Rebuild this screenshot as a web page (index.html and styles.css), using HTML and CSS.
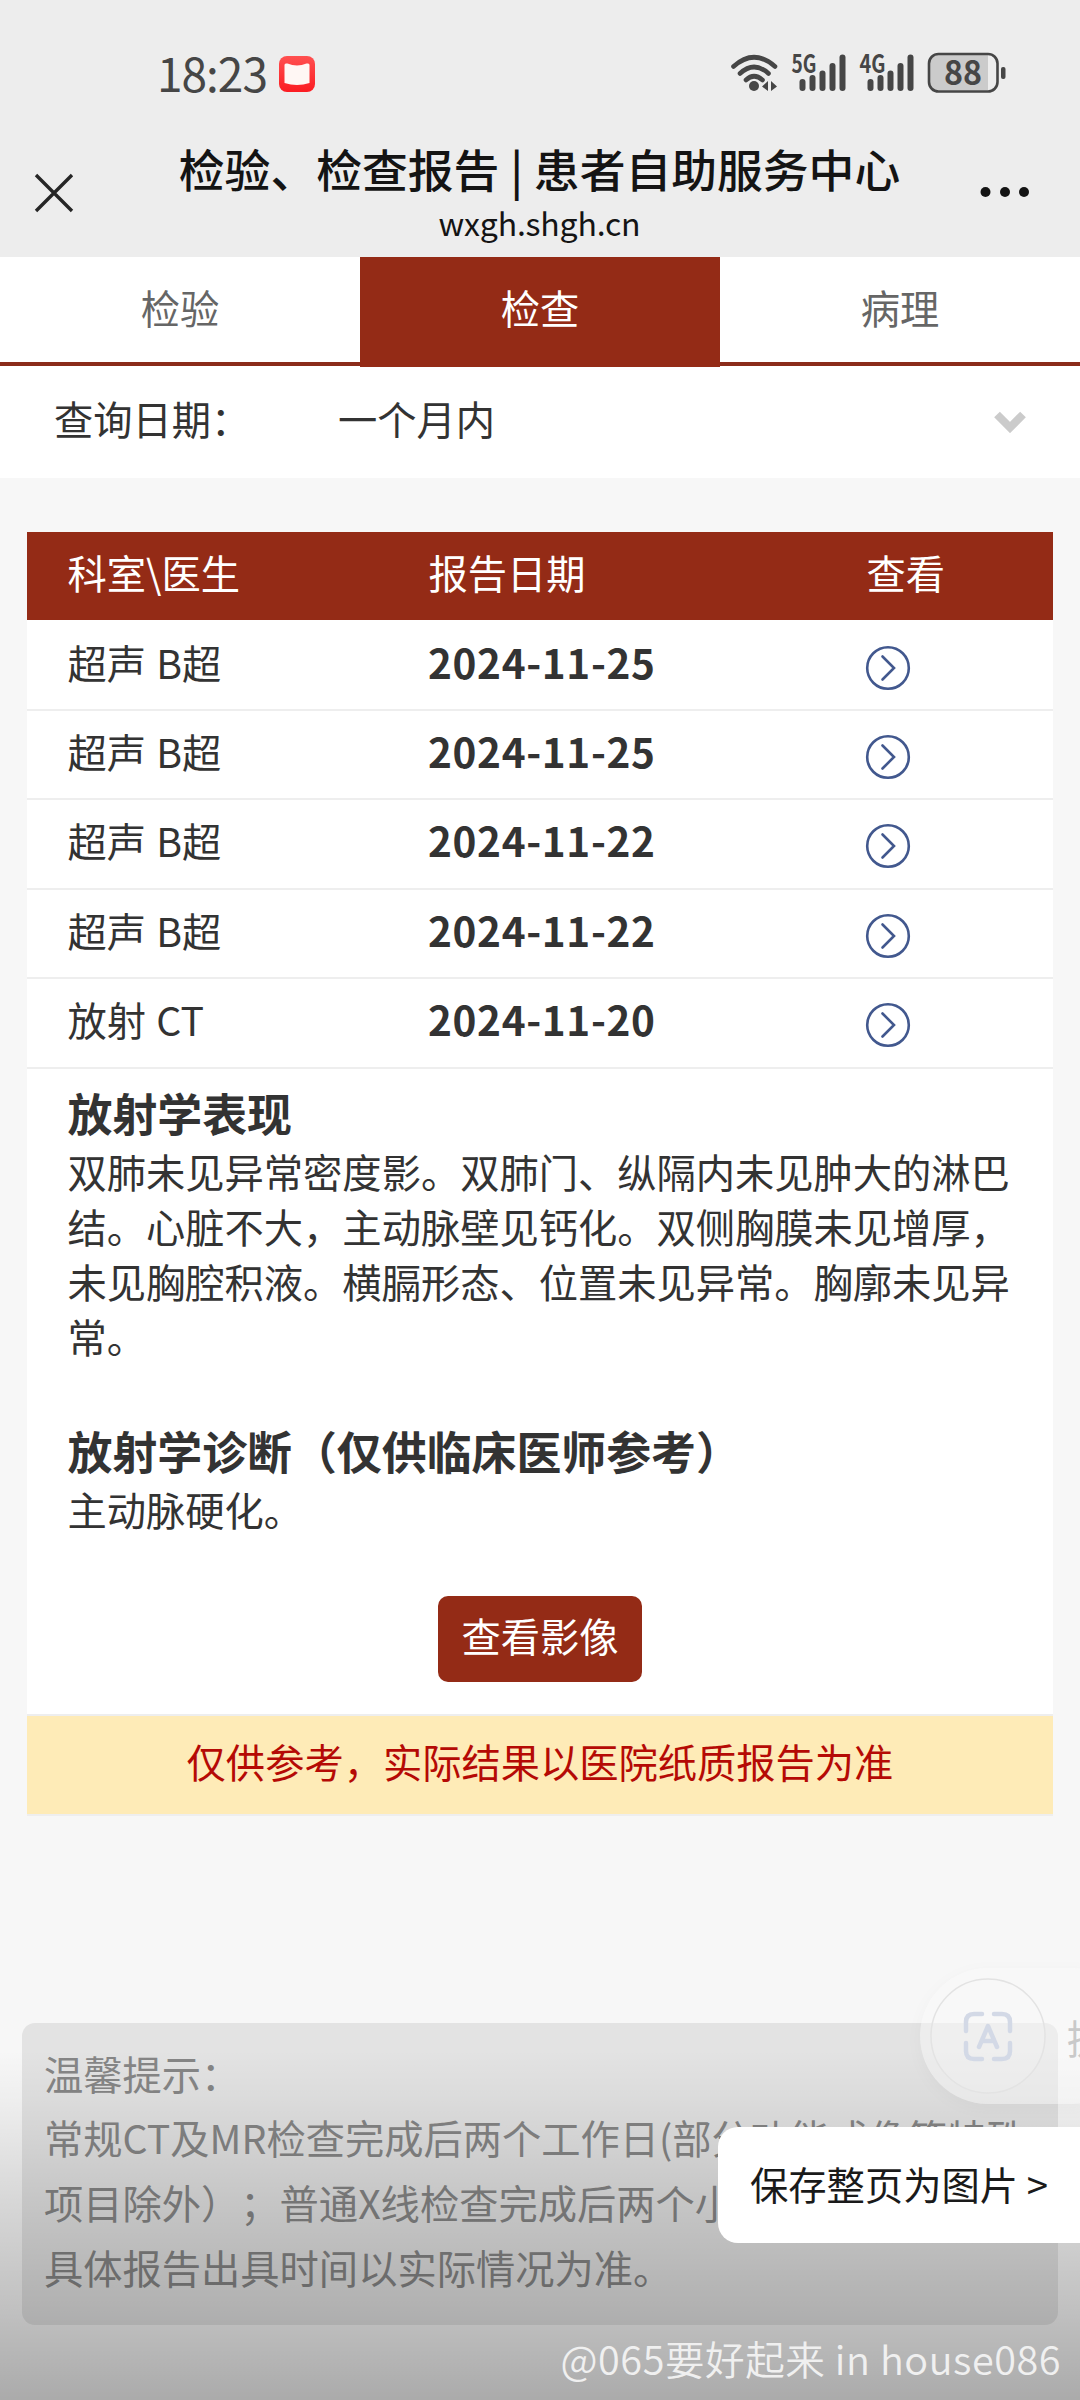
FILE: index.html
```html
<!DOCTYPE html>
<html lang="zh-CN">
<head>
<meta charset="utf-8">
<title>检验、检查报告 | 患者自助服务中心</title>
<link rel="stylesheet" href="styles.css">
</head>
<body>
<div class="screen">
  <header class="top">
    <div class="status">
      <span class="clock">18:23</span>
      <svg class="app-icon" viewBox="0 0 36 36"><defs><linearGradient id="red" x1="0" y1="0" x2="0" y2="1"><stop offset="0" stop-color="#ff5050"/><stop offset="1" stop-color="#fb1c22"/></linearGradient></defs><rect width="36" height="36" rx="8" fill="url(#red)"/><path d="M5.500 9Q5.500 7.500 7 7.500H8.500Q18 11.500 27.500 7.500H29Q30.500 7.500 30.500 9V27Q18 31 5.500 27Z" fill="#fff7f4"/></svg>
      <svg class="status-icons" viewBox="0 0 276 40">
        <g fill="none" stroke="#464646" stroke-width="4.600" stroke-linecap="round">
          <path d="M3.500 13.500Q24 -5 45 13.500"/><path d="M10 20.500Q24 7.500 38.500 20.500"/><path d="M16 27Q24 19.500 32.500 27"/>
        </g>
        <g fill="#464646">
          <circle cx="24" cy="33" r="5"/><path d="M32 33.500L38 28V38ZM47 33.500L41 28V38Z"/>
          <rect x="69.500" y="26" width="6" height="12" rx="3"/><rect x="79.500" y="22" width="6" height="16" rx="3"/><rect x="89.500" y="17.500" width="6" height="20.500" rx="3"/><rect x="99.500" y="10" width="6" height="28" rx="3"/><rect x="109.500" y="1.500" width="6" height="36.500" rx="3"/>
          <rect x="137.500" y="26" width="6" height="12" rx="3"/><rect x="147.500" y="22" width="6" height="16" rx="3"/><rect x="157.500" y="17.500" width="6" height="20.500" rx="3"/><rect x="167.500" y="10" width="6" height="28" rx="3"/><rect x="177.500" y="1.500" width="6" height="36.500" rx="3"/>
          <rect x="271" y="14" width="4.500" height="12" rx="2"/>
        </g>
        <path d="M208 1.500H258V37.500H208Q199.500 37.500 199.500 29V10Q199.500 1.500 208 1.500Z" fill="#cbcbcb"/>
        <rect x="199" y="1" width="68.500" height="37.500" rx="9.500" fill="none" stroke="#464646" stroke-width="2.600"/>
        <g class="icon-text"><text x="61.500" y="20" font-size="25" textLength="25" lengthAdjust="spacingAndGlyphs">5G</text><text x="129.500" y="20" font-size="25" textLength="26" lengthAdjust="spacingAndGlyphs">4G</text><text x="214" y="31.500" font-size="34" textLength="38" lengthAdjust="spacingAndGlyphs">88</text></g>
      </svg>
    </div>
    <div class="nav">
      <svg class="close" viewBox="0 0 40 40"><path d="M2 2L38 38M38 2L2 38" stroke="#262626" stroke-width="3.400"/></svg>
      <div class="nav-title"><h1>检验、检查报告 | 患者自助服务中心</h1><p>wxgh.shgh.cn</p></div>
      <svg class="more" viewBox="0 0 50 12"><g fill="#141414"><circle cx="5.500" cy="6" r="5"/><circle cx="25" cy="6" r="5"/><circle cx="44" cy="6" r="5"/></g></svg>
    </div>
  </header>

  <nav class="tabs"><span class="tab">检验</span><span class="tab active">检查</span><span class="tab">病理</span></nav>

  <div class="query">
    <span class="query-label">查询日期：</span><span class="query-value">一个月内</span>
    <svg class="chevron" viewBox="0 0 32 22"><path d="M3 3.500L16 16.500L29 3.500" fill="none" stroke="#cbcbcb" stroke-width="8"/></svg>
  </div>

  <main class="report">
    <div class="row head"><span>科室\医生</span><span>报告日期</span><span>查看</span></div>
    <div class="row"><span>超声 B超</span><b>2024-11-25</b><svg class="go" viewBox="0 0 46 46"><circle cx="23" cy="23" r="20.800"/><path d="M17.500 11.500L29 23L17.500 34.500"/></svg></div>
    <div class="row"><span>超声 B超</span><b>2024-11-25</b><svg class="go" viewBox="0 0 46 46"><circle cx="23" cy="23" r="20.800"/><path d="M17.500 11.500L29 23L17.500 34.500"/></svg></div>
    <div class="row"><span>超声 B超</span><b>2024-11-22</b><svg class="go" viewBox="0 0 46 46"><circle cx="23" cy="23" r="20.800"/><path d="M17.500 11.500L29 23L17.500 34.500"/></svg></div>
    <div class="row"><span>超声 B超</span><b>2024-11-22</b><svg class="go" viewBox="0 0 46 46"><circle cx="23" cy="23" r="20.800"/><path d="M17.500 11.500L29 23L17.500 34.500"/></svg></div>
    <div class="row"><span>放射 CT</span><b>2024-11-20</b><svg class="go" viewBox="0 0 46 46"><circle cx="23" cy="23" r="20.800"/><path d="M17.500 11.500L29 23L17.500 34.500"/></svg></div>
    <section class="detail">
      <h2>放射学表现</h2>
      <p>双肺未见异常密度影。双肺门、纵隔内未见肿大的淋巴<br>结。心脏不大，主动脉壁见钙化。双侧胸膜未见增厚，<br>未见胸腔积液。横膈形态、位置未见异常。胸廓未见异<br>常。</p>
      <h2 class="diagnosis">放射学诊断（仅供临床医师参考）</h2>
      <p>主动脉硬化。</p>
      <button class="view">查看影像</button>
    </section>
    <div class="notice">仅供参考，实际结果以医院纸质报告为准</div>
  </main>

  <aside class="tips">温馨提示：<br>常规CT及MR检查完成后两个工作日(部分功能成像等特殊<br>项目除外）；普通X线检查完成后两个小<br>具体报告出具时间以实际情况为准。</aside>

  <div class="shade"></div>
  <div class="scan">
    <svg class="scan-icon" viewBox="0 0 116 116"><circle cx="58" cy="58" r="57"/><g><path d="M36 53V44Q36 36 44 36H52M64 36H72Q80 36 80 44V53M80 65V73Q80 81 72 81H64M52 81H44Q36 81 36 73V65"/><path d="M49 69L58 48L67 69M53 63H63"/></g></svg>
    <span>提</span>
  </div>
  <div class="save">保存整页为图片 &gt;</div>
  <div class="watermark">@065要好起来 in house086</div>
</div>
</body>
</html>
```

FILE: styles.css
```css
* { box-sizing: border-box; margin: 0; padding: 0; }
body { font-family: "Noto Sans CJK SC", "Noto Sans", sans-serif; font-size: 39.27px; color: #333; background: #f7f7f7; text-spacing-trim: space-all; }
.screen { position: relative; width: 1080px; height: 2400px; overflow: hidden; display: flex; flex-direction: column; background: #f7f7f7; }
svg { display: block; flex: none; }

.top { height: 257px; flex: none; background: #ededed; }
.status { height: 132px; padding: 52px 74px 0 157px; display: flex; align-items: flex-start; }
.clock { width: 122px; font-size: 46px; line-height: 40px; letter-spacing: -1px; color: #464646; }
.app-icon { width: 36px; height: 36px; margin-top: 4px; }
.status-icons { width: 276px; height: 40px; margin: 1px 0 0 auto; overflow: visible; }
.icon-text { fill: #464646; font-weight: 700; }
.nav { height: 125px; padding: 0 50px 0 34px; display: flex; align-items: flex-start; justify-content: space-between; }
.close { width: 40px; height: 40px; margin-top: 41px; }
.more { width: 50px; height: 12px; margin-top: 54px; }
.nav-title { width: 760px; text-align: center; color: #141414; white-space: nowrap; padding-left: 25px; }
.nav-title h1 { font-size: 45.8px; font-weight: 500; line-height: 60px; padding-top: 6px; word-spacing: 0.5px; }
.nav-title p { font-size: 32px; line-height: 40px; padding-top: 4px; letter-spacing: -0.2px; }

.tabs { height: 110px; flex: none; display: flex; align-items: flex-start; background: linear-gradient(#fff 105px, #8b2c1a 105px, #8b2c1a 109px, #fff 109px); }
.tab { flex: 1; height: 110px; line-height: 100px; text-align: center; color: #666; }
.tab.active { background: #942b16; color: #fff; }

.query { height: 111px; flex: none; padding: 0 54px; background: #fff; display: flex; align-items: flex-start; line-height: 102px; }
.query-label { width: 284px; }
.query-value { flex: 1; }
.chevron { width: 32px; height: 22px; margin-top: 44px; }

.report { width: 1026px; margin: 54px 27px 0; flex: none; background: #fff; }
.row { height: 89.4px; padding-left: 40.5px; display: grid; grid-template-columns: 360.5px 436px 1fr; line-height: 79px; border-bottom: 2px solid #eee; }
.row.head { height: 88px; background: #942b16; color: #fff; line-height: 79px; border: 0; grid-template-columns: 361px 438px 1fr; }
.row.head + .row { height: 91px; padding-top: 1.600px; }
.row b { font-weight: 700; color: #333; font-size: 40.5px; letter-spacing: 0.65px; }
.row span { word-spacing: 1.5px; }
.go { width: 46px; height: 46px; margin: 23px 0 0 1px; fill: none; stroke: #42588e; stroke-width: 2.600; stroke-linecap: round; }
.detail { padding: 16px 40.5px 0; height: 645px; line-height: 55px; }
.detail p { white-space: nowrap; }
.detail h2 { font-size: 44.9px; line-height: 56px; height: 58px; }
.detail .diagnosis { margin-top: 60px; }
.view { display: block; width: 204px; height: 86px; margin: 60px auto 0; border: 0; border-radius: 10px; background: #942b16; color: #fff; font: inherit; line-height: 78px; padding-bottom: 8px; }
.notice { height: 102px; background: #feebb7; color: #b50a05; text-align: center; line-height: 89px; border: solid #eee; border-width: 2px 0; }

.tips { margin: 207px 22px 0; height: 302px; flex: none; padding: 18px 0 0 22px; border-radius: 13px; background: #e3e3e3; color: #868686; line-height: 64.8px; white-space: nowrap; }

/* bottom fade over the page */
.shade { position: absolute; left: 0; right: 0; bottom: 0; height: 350px; background: linear-gradient(rgba(0,0,0,0), rgba(0,0,0,.035) 14%, rgba(0,0,0,.13) 43%, rgba(0,0,0,.225) 75%, rgba(0,0,0,.31)); }
.scan { position: absolute; left: 920px; top: 1968px; width: 220px; height: 136px; border-radius: 68px; background: rgba(250,250,250,.42); box-shadow: 0 4px 18px rgba(0,0,0,.03); display: flex; align-items: center; gap: 21px; padding-left: 10px; color: #c9c9c9; }
.scan-icon { width: 116px; height: 116px; }
.scan-icon circle { fill: rgba(255,255,255,.12); stroke: #e3e3e3; stroke-width: 1.500; }
.scan-icon g { fill: none; stroke: #d3d9e6; stroke-width: 4.500; stroke-linecap: round; stroke-linejoin: round; }
.save { position: absolute; left: 718px; top: 2127px; width: 362px; height: 116px; border-radius: 20px 0 0 20px; background: #fff; color: #1a1a1a; font-size: 38.3px; line-height: 114px; padding-left: 32px; white-space: nowrap; }
.watermark { position: absolute; right: 19px; bottom: 14px; font-size: 39.6px; line-height: 56px; font-weight: 350; letter-spacing: 0.55px; color: #f0f0f0; white-space: nowrap; }
```
